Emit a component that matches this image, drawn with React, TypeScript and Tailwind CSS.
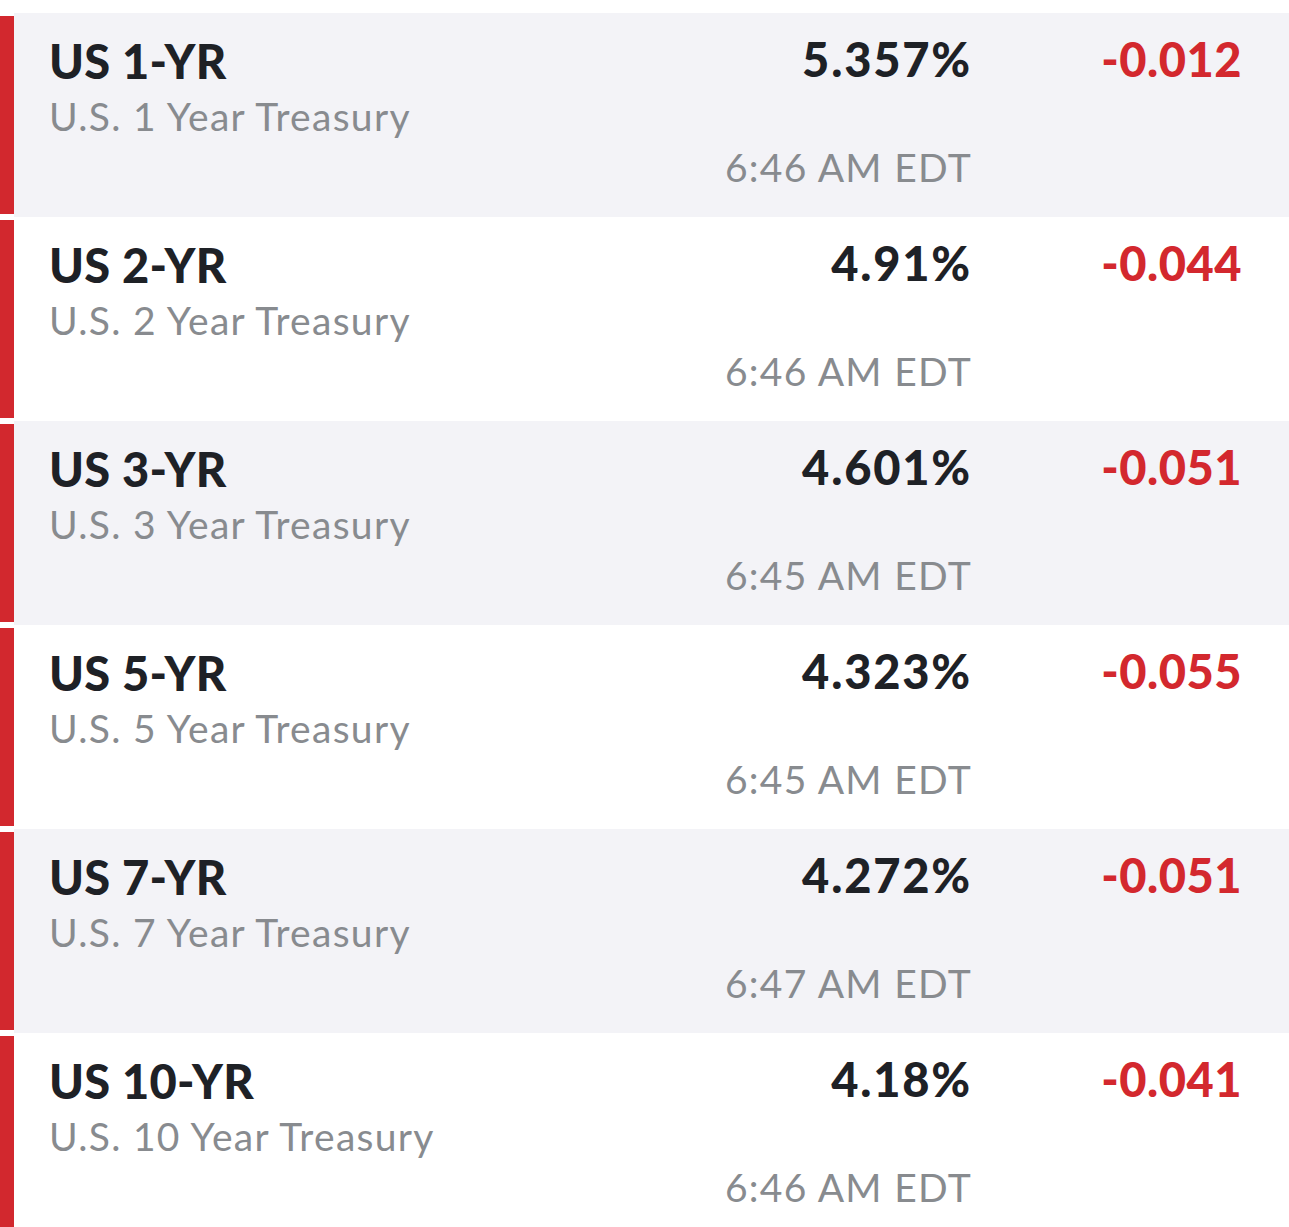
import React from "react";

type Row = { sym: string; name: string; value: string; change: string; time: string };

const rows: Row[] = [
  { sym: "US 1-YR", name: "U.S. 1 Year Treasury", value: "5.357%", change: "-0.012", time: "6:46 AM EDT" },
  { sym: "US 2-YR", name: "U.S. 2 Year Treasury", value: "4.91%", change: "-0.044", time: "6:46 AM EDT" },
  { sym: "US 3-YR", name: "U.S. 3 Year Treasury", value: "4.601%", change: "-0.051", time: "6:45 AM EDT" },
  { sym: "US 5-YR", name: "U.S. 5 Year Treasury", value: "4.323%", change: "-0.055", time: "6:45 AM EDT" },
  { sym: "US 7-YR", name: "U.S. 7 Year Treasury", value: "4.272%", change: "-0.051", time: "6:47 AM EDT" },
  { sym: "US 10-YR", name: "U.S. 10 Year Treasury", value: "4.18%", change: "-0.041", time: "6:46 AM EDT" },
];

export default function App() {
  return (
    <div
      className="w-[1289px] h-[1227px] overflow-hidden bg-white pt-[13px]"
      style={{ fontFamily: "Lato, 'Noto Sans', sans-serif" }}
    >
      {rows.map((r, i) => (
        <div key={r.sym} className="flex h-[204px]">
          <div className="w-[14px] my-[3px] bg-[#d2282e]" />
          <div
            className={
              "flex-1 grid grid-cols-[1fr_auto_270px] pr-[47px] pl-[35px] " +
              (i % 2 === 0 ? "bg-[#f3f3f7]" : "bg-white")
            }
          >
            <div className="flex flex-col pt-[22px]">
              <div className="text-[47px] leading-[52px] font-black tracking-[0.3px] text-[#1e2126]">{r.sym}</div>
              <div className="text-[39px] leading-[52px] tracking-[1.3px] text-[#888b8f] mt-[3px]">{r.name}</div>
            </div>
            <div className="flex flex-col items-end pt-[20px]">
              <div className="text-[47px] leading-[52px] font-black tracking-[1.8px] text-[#1e2126]">{r.value}</div>
              <div className="text-[39px] leading-[52px] tracking-[1.3px] text-[#888b8f] mt-[56px]">{r.time}</div>
            </div>
            <div className="flex flex-col items-end pt-[20px]">
              <div className="text-[47px] leading-[52px] font-black tracking-[0.5px] text-[#d3282e]">{r.change}</div>
            </div>
          </div>
        </div>
      ))}
    </div>
  );
}
